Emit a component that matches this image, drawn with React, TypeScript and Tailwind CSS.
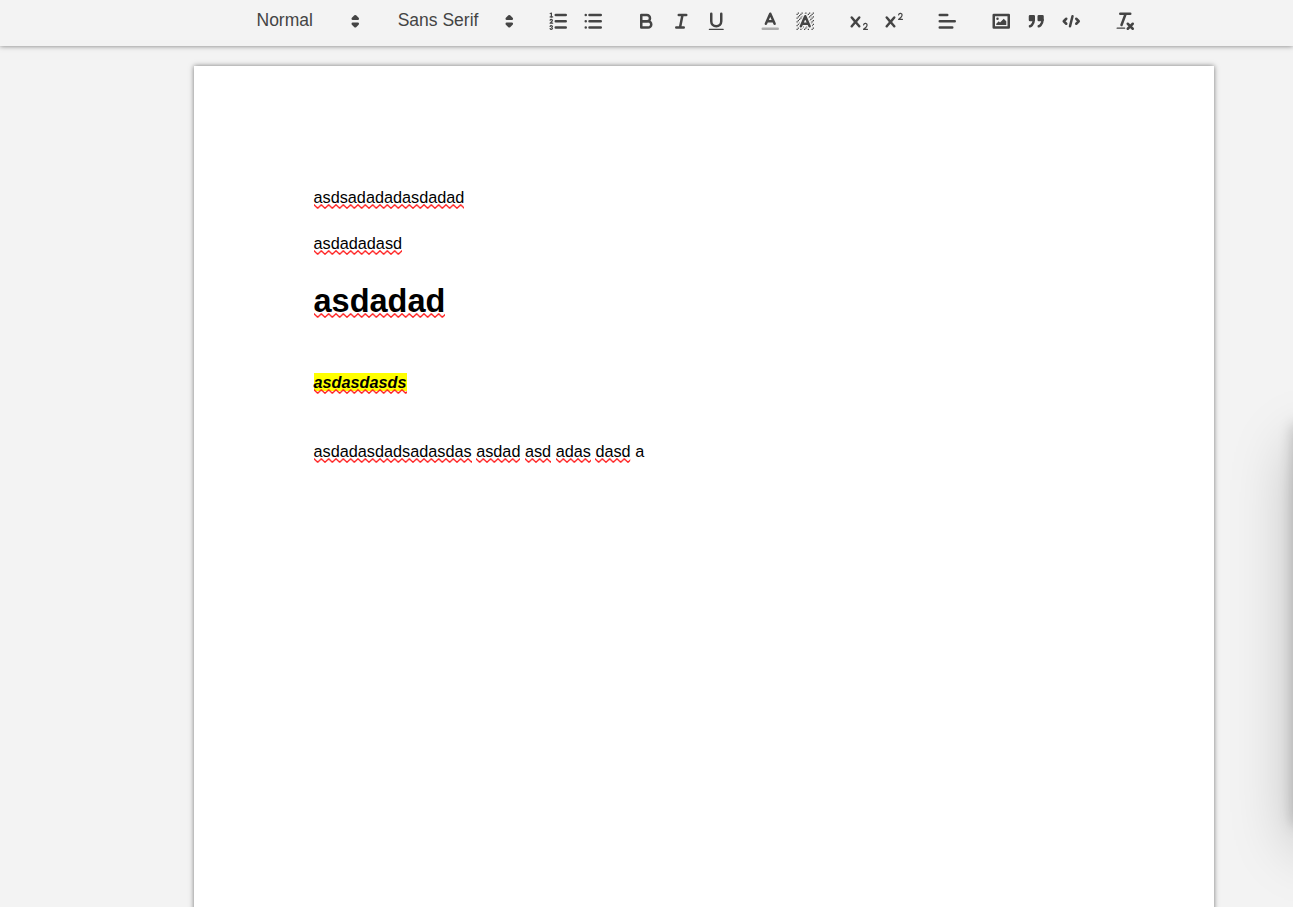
import { useId, type ReactNode } from "react";

const STROKE = "fill-none stroke-[#444] stroke-2 [stroke-linecap:round] [stroke-linejoin:round]";
const THIN = "fill-none stroke-[#444] stroke-1 [stroke-linecap:round] [stroke-linejoin:round]";
const FILL = "fill-[#444]";
const SOLID = "fill-[#444] stroke-[#444] stroke-2 [stroke-linecap:round] [stroke-linejoin:round]";

const CROSS =
  "M9.65,5.241a1,1,0,0,0-1.409.108L6,7.964,3.759,5.349A1,1,0,0,0,2.192,6.59178Q2.21541,6.6213,2.241,6.649L4.684,9.5,2.241,12.35A1,1,0,0,0,3.71,13.70722q0.02557-.02768.049-0.05722L6,11.036,8.241,13.65a1,1,0,1,0,1.567-1.24277Q9.78459,12.3777,9.759,12.35L7.316,9.5,9.759,6.651A1,1,0,0,0,9.65,5.241Z";

// [x, y] of the single-unit squares in the hatch behind the background "A"
const HATCH = [
  [4, 4], [2, 6], [3, 5], [4, 7], [2, 12], [2, 9], [2, 15], [3, 8], [12, 2], [11, 3],
  [2, 3], [6, 2], [3, 2], [5, 3], [9, 2], [15, 14], [13, 7], [15, 5], [14, 6], [15, 8],
  [14, 9], [14, 3], [15, 2], [12, 5], [13, 4], [9, 14], [8, 15], [5, 15], [11, 15], [14, 15], [15, 11],
];

const icons: Record<string, ReactNode> = {
  ordered: (
    <>
      <path className={STROKE} d="M7,4H15M7,9H15M7,14H15" />
      <path className={THIN} d="M2.5,5.5H4.5" />
      <path className={FILL} d="M3.5,6A0.5,0.5,0,0,1,3,5.5V3.085l-0.276.138A0.5,0.5,0,0,1,2.053,3c-0.124-.247-0.023-0.324.224-0.447l1-.5A0.5,0.5,0,0,1,4,2.5v3A0.5,0.5,0,0,1,3.5,6Z" />
      <path className={THIN} d="M4.5,10.5h-2c0-.234,1.85-1.076,1.85-2.234A0.959,0.959,0,0,0,2.5,8.156" />
      <path className={THIN} d="M2.5,14.846a0.959,0.959,0,0,0,1.85-.109A0.7,0.7,0,0,0,3.75,14a0.688,0.688,0,0,0,.6-0.736,0.959,0.959,0,0,0-1.85-.109" />
    </>
  ),
  bullet: <path className={STROKE} d="M6,4H15M6,9H15M6,14H15M3,4H3M3,9H3M3,14H3" />,
  bold: (
    <>
      <path className={STROKE} d="M5,4H9.5A2.5,2.5,0,0,1,12,6.5v0A2.5,2.5,0,0,1,9.5,9H5V4Z" />
      <path className={STROKE} d="M5,9h5.5A2.5,2.5,0,0,1,13,11.5v0A2.5,2.5,0,0,1,10.5,14H5V9Z" />
    </>
  ),
  italic: <path className={STROKE} d="M7,4H13M5,14H11M8,14L10,4" />,
  underline: (
    <>
      <path className={STROKE} d="M5,3V9a4.012,4.012,0,0,0,4,4H9a4.012,4.012,0,0,0,4-4V3" />
      <rect className={FILL} height="1" rx="0.5" width="12" x="3" y="15" />
    </>
  ),
  color: (
    <>
      <path className={STROKE} opacity="0.4" d="M3,15H15" />
      <path className={STROKE} d="M5.5,11L9,3L12.5,11M11.63,9H6.38" />
    </>
  ),
  background: (
    <>
      <g className={FILL}>
        {HATCH.map(([x, y]) => (
          <rect key={`${x}-${y}`} x={x} y={y} width="1" height="1" />
        ))}
        <polygon points="6 6.868 6 6 5 6 5 7 5.942 7 6 6.868" />
        <polygon points="6.817 5 6 5 6 6 6.38 6 6.817 5" />
        <polygon points="4 11.439 4 11 3 11 3 12 3.755 12 4 11.439" />
        <polygon points="4.63 10 4 10 4 11 4.192 11 4.63 10" />
        <polygon points="13.447 10.174 13.808 11 14 11 14 10 13.37 10" />
        <polygon points="12 6.868 12 6 11.62 6 12 6.868" />
        <polygon points="12.933 9 13 9 13 8 12.495 8 12.933 9" />
        <path d="M10.832,4.2L11,4.582V4H10.708A1.948,1.948,0,0,1,10.832,4.2Z" />
        <path d="M7,4.582L7.168,4.2A1.929,1.929,0,0,1,7.292,4H7V4.582Z" />
        <path d="M8,13H7.683l-0.351.8a1.933,1.933,0,0,1-.124.2H8V13Z" />
        <path d="M9,3H8V3.282A1.985,1.985,0,0,1,9,3Z" />
        <path d="M3.775,14H3v1H4V14.314A1.97,1.97,0,0,1,3.775,14Z" />
        <path d="M6,14.926V15H7V14.316A1.993,1.993,0,0,1,6,14.926Z" />
        <path d="M10.668,13.8L10.317,13H10v1h0.792A1.947,1.947,0,0,1,10.668,13.8Z" />
        <path d="M14.332,12.2a1.99,1.99,0,0,1,.166.8H15V12H14.245Z" />
      </g>
      <path className={STROKE} d="M5.5,13L9,5L12.5,13M11.63,11H6.38" />
    </>
  ),
  sub: (
    <>
      <path className={FILL} d="M15.5,15H13.861a3.858,3.858,0,0,0,1.914-2.975,1.8,1.8,0,0,0-1.6-1.751A1.921,1.921,0,0,0,12.021,11.7a0.50013,0.50013,0,1,0,.957.291h0a0.914,0.914,0,0,1,1.053-.725,0.81,0.81,0,0,1,.744.762c0,1.076-1.16971,1.86982-1.93971,2.43082A1.45639,1.45639,0,0,0,12,15.5a0.5,0.5,0,0,0,.5.5h3A0.5,0.5,0,0,0,15.5,15Z" />
      <path className={FILL} d={CROSS} />
    </>
  ),
  sup: (
    <>
      <path className={FILL} d="M15.5,7H13.861a4.015,4.015,0,0,0,1.914-2.975,1.8,1.8,0,0,0-1.6-1.751A1.922,1.922,0,0,0,12.021,3.7a0.5,0.5,0,1,0,.957.291,0.917,0.917,0,0,1,1.053-.725,0.81,0.81,0,0,1,.744.762c0,1.077-1.164,1.925-1.934,2.486A1.423,1.423,0,0,0,12,7.5a0.5,0.5,0,0,0,.5.5h3A0.5,0.5,0,0,0,15.5,7Z" />
      <path className={FILL} d={CROSS} />
    </>
  ),
  align: <path className={STROKE} d="M3,9H15M3,14H13M3,4H9" />,
  image: (
    <>
      <rect className={STROKE} height="10" width="12" x="3" y="4" />
      <circle className={FILL} cx="6" cy="7" r="1" />
      <polyline className={FILL} points="5 12 5 11 7 9 8 10 11 7 13 9 13 12 5 12" />
    </>
  ),
  blockquote: (
    <>
      <rect className={SOLID} height="3" width="3" x="4" y="5" />
      <rect className={SOLID} height="3" width="3" x="11" y="5" />
      <path className={SOLID} d="M7,8c0,4.031-3,5-3,5" />
      <path className={SOLID} d="M14,8c0,4.031-3,5-3,5" />
    </>
  ),
  code: <path className={STROKE} d="M5,7L3,9L5,11M13,7L15,9L13,11M10,5L8,13" />,
  clean: (
    <>
      <path className={STROKE} d="M5,3H13M6,12L9.35,3M11,11L15,15M15,11L11,15" />
      <rect className={FILL} height="1" rx="0.5" width="7" x="2" y="14" />
    </>
  ),
  arrows: <path className={STROKE} d="M7,11L9,13L11,11ZM7,7L9,5L11,7Z" />,
};

const groups = [
  ["ordered", "bullet"],
  ["bold", "italic", "underline"],
  ["color", "background"],
  ["sub", "sup"],
  ["align"],
  ["image", "blockquote", "code"],
  ["clean"],
];

function Icon({ name }: { name: string }) {
  return (
    <svg viewBox="0 0 18 18" className="h-[22.5px] w-[22.5px] shrink-0">
      {icons[name]}
    </svg>
  );
}

function Picker({ label, className }: { label: string; className: string }) {
  return (
    <button className={`flex h-[30px] items-center justify-between pr-[1.25px] pl-[11px] ${className}`}>
      <span className="-mt-[3px] text-[17.5px] leading-[30px] font-medium text-[#444]">{label}</span>
      <Icon name="arrows" />
    </button>
  );
}

function Toolbar() {
  return (
    <header className="relative z-10 flex h-[46px] items-start gap-[18.7px] bg-[#f3f3f3] pt-[6.25px] pl-[245.5px] shadow-[0_0_5px_0_rgba(0,0,0,0.5)]">
      <Picker label="Normal" className="w-[122.5px]" />
      <Picker label="Sans Serif" className="w-[135px]" />
      {groups.map((group) => (
        <div key={group[0]} className="flex">
          {group.map((name) => (
            <button key={name} aria-label={name} className="flex h-[30px] w-[35px] items-center pl-[6.25px]">
              <Icon name={name} />
            </button>
          ))}
        </div>
      ))}
    </header>
  );
}

// A word the spell checker has flagged
function Typo({ children, offset = "bottom-0" }: { children: ReactNode; offset?: string }) {
  const id = useId();
  return (
    <span className="relative inline-block">
      {children}
      <svg className={`absolute left-0 h-[5px] w-full ${offset}`}>
        <pattern id={id} width="7.333" height="5" patternUnits="userSpaceOnUse">
          <path d="M-3.667,4.2L0,0.8L3.667,4.2L7.333,0.8L11,4.2" fill="none" stroke="#f22" strokeWidth="1.4" />
        </pattern>
        <rect width="100%" height="5" fill={`url(#${id})`} />
      </svg>
    </span>
  );
}

export default function App() {
  return (
    <div className="relative h-[907px] overflow-hidden bg-[#f3f3f3] font-['Liberation_Sans',Arial,sans-serif]">
      <Toolbar />
      <main className="mt-5 ml-[194px] h-[1320px] w-[1020px] bg-white py-[120px] pr-[120px] pl-[119.5px] text-[16.25px] leading-[23px] text-black shadow-[0_0_5px_0_rgba(0,0,0,0.5)]">
        <p><Typo>asdsadadadasdadad</Typo></p>
        <p className="mt-[23px]"><Typo>asdadadasd</Typo></p>
        <h1 className="mt-[23px] text-[32.5px] leading-[46px] font-bold"><Typo offset="bottom-[6px]">asdadad</Typo></h1>
        <p className="mt-[47px]">
          <em className="bg-[#ff0] font-bold"><Typo>asdasdasds</Typo></em>
        </p>
        <p className="mt-[46px]">
          <Typo>asdadasdadsadasdas</Typo> <Typo>asdad</Typo> <Typo>asd</Typo> <Typo>adas</Typo> <Typo>dasd</Typo> a
        </p>
      </main>
      {/* panel parked just past the right edge, only its shadow shows */}
      <aside className="absolute top-[420px] left-full h-[400px] w-[300px] shadow-[0_26px_58px_0_rgba(0,0,0,0.22),0_5px_14px_0_rgba(0,0,0,0.22)]" />
    </div>
  );
}
